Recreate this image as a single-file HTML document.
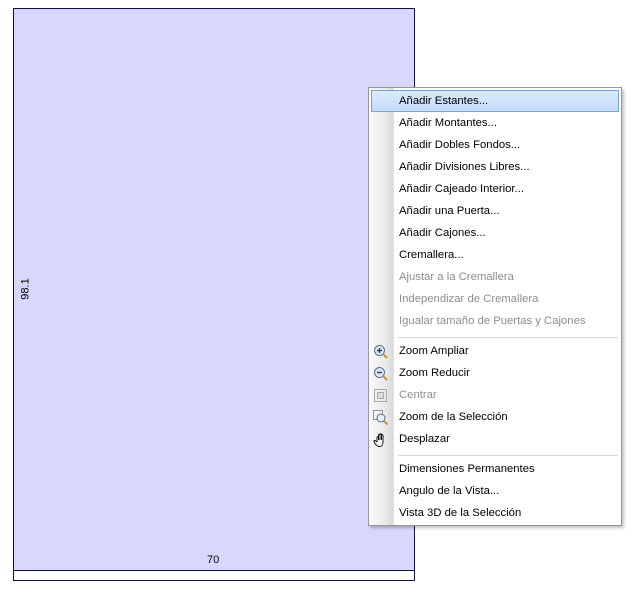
<!DOCTYPE html>
<html><head><meta charset="utf-8"><style>
body{margin:0;width:634px;height:594px;background:#fff;position:relative;overflow:hidden;font-family:"Liberation Sans",sans-serif;}
.rect{position:absolute;left:13px;top:8px;width:400px;height:561px;background:#d8d8fc;border:1px solid #101040;}
.band{position:absolute;left:13px;top:571px;width:400px;height:9px;border:1px solid #101040;border-top:none;background:#fff;}
.lbl{position:absolute;font-size:11px;color:#000;}
.menu{position:absolute;left:368px;top:87px;width:252px;height:437px;background:#fff;border:1px solid #979797;box-shadow:2px 2px 3px rgba(0,0,0,.25);}
.gut{position:absolute;left:0;top:0;width:24px;height:100%;background:linear-gradient(to right,#fafafa,#e9e9ea 70%,#d8d8da);border-right:1px solid #e2e3e3;}
.it{position:absolute;left:30px;height:22px;line-height:20px;font-size:11.3px;color:#000;white-space:nowrap;}
.dis{color:#8d8d8d;}
.hl{position:absolute;left:2px;top:2px;width:246px;height:20px;background:linear-gradient(#dcebfc,#c1dbfc);border:1px solid #7da2ce;}
.sep{position:absolute;left:29px;width:220px;height:1px;background:#d6d6d6;border-bottom:1px solid #fff;}
.ic{position:absolute;left:4px;width:16px;height:16px;}
</style></head><body>
<div class="rect"></div><div class="band"></div>
<div class="lbl" style="left:207px;top:554px;">70</div>
<div class="lbl" style="left:15px;top:283px;transform:rotate(-90deg);transform-origin:center;">98.1</div>
<div class="menu">
<div class="gut"></div>
<div class="hl"></div>
<div class="it" style="top:3px">Añadir Estantes...</div>
<div class="it" style="top:25px">Añadir Montantes...</div>
<div class="it" style="top:47px">Añadir Dobles Fondos...</div>
<div class="it" style="top:69px">Añadir Divisiones Libres...</div>
<div class="it" style="top:91px">Añadir Cajeado Interior...</div>
<div class="it" style="top:113px">Añadir una Puerta...</div>
<div class="it" style="top:135px">Añadir Cajones...</div>
<div class="it" style="top:157px">Cremallera...</div>
<div class="it dis" style="top:179px">Ajustar a la Cremallera</div>
<div class="it dis" style="top:201px">Independizar de Cremallera</div>
<div class="it dis" style="top:223px">Igualar tamaño de Puertas y Cajones</div>
<div class="sep" style="top:249px"></div>
<svg class="ic" style="top:256px" viewBox="0 0 16 16"><circle cx="6.5" cy="6.5" r="5" fill="#dce6f2" stroke="#5a6f8a"/><path d="M4 6.5h5M6.5 4v5" stroke="#2a3f6a" stroke-width="1.4"/><path d="M10 10l4 4" stroke="#c89a2a" stroke-width="2.2"/></svg>
<div class="it" style="top:253px">Zoom Ampliar</div>
<svg class="ic" style="top:278px" viewBox="0 0 16 16"><circle cx="6.5" cy="6.5" r="5" fill="#dce6f2" stroke="#5a6f8a"/><path d="M4 6.5h5" stroke="#2a3f6a" stroke-width="1.4"/><path d="M10 10l4 4" stroke="#c89a2a" stroke-width="2.2"/></svg>
<div class="it" style="top:275px">Zoom Reducir</div>
<svg class="ic" style="top:300px" viewBox="0 0 16 16"><rect x="1.5" y="1.5" width="12" height="12" fill="none" stroke="#aaa"/><rect x="4.5" y="4.5" width="6" height="6" fill="#ddd" stroke="#aaa"/></svg>
<div class="it dis" style="top:297px">Centrar</div>
<svg class="ic" style="top:322px" viewBox="0 0 16 16"><rect x="0.5" y="0.5" width="9" height="9" fill="none" stroke="#333" stroke-dasharray="1 1"/><circle cx="8" cy="8" r="4" fill="#e4ecf6" stroke="#5a6f8a"/><path d="M11 11l3.5 3.5" stroke="#c89a2a" stroke-width="2"/></svg>
<div class="it" style="top:319px">Zoom de la Selección</div>
<svg class="ic" style="top:344px" viewBox="0 0 16 16"><path d="M4 10V5.5c0-1 1.5-1 1.5 0V8M5.5 8V3c0-1 1.5-1 1.5 0v5M7 8V2.5c0-1 1.5-1 1.5 0V8M8.5 8V3.5c0-1 1.5-1 1.5 0V10c0 3-1.5 4.5-3.5 4.5S3 13 2 11.5L1 9.5c-.5-1 .8-1.6 1.4-.7L4 10" fill="#fff" stroke="#000" stroke-width=".9"/></svg>
<div class="it" style="top:341px">Desplazar</div>
<div class="sep" style="top:367px"></div>
<div class="it" style="top:371px">Dimensiones Permanentes</div>
<div class="it" style="top:393px">Angulo de la Vista...</div>
<div class="it" style="top:415px">Vista 3D de la Selección</div>
</div>
</body></html>
